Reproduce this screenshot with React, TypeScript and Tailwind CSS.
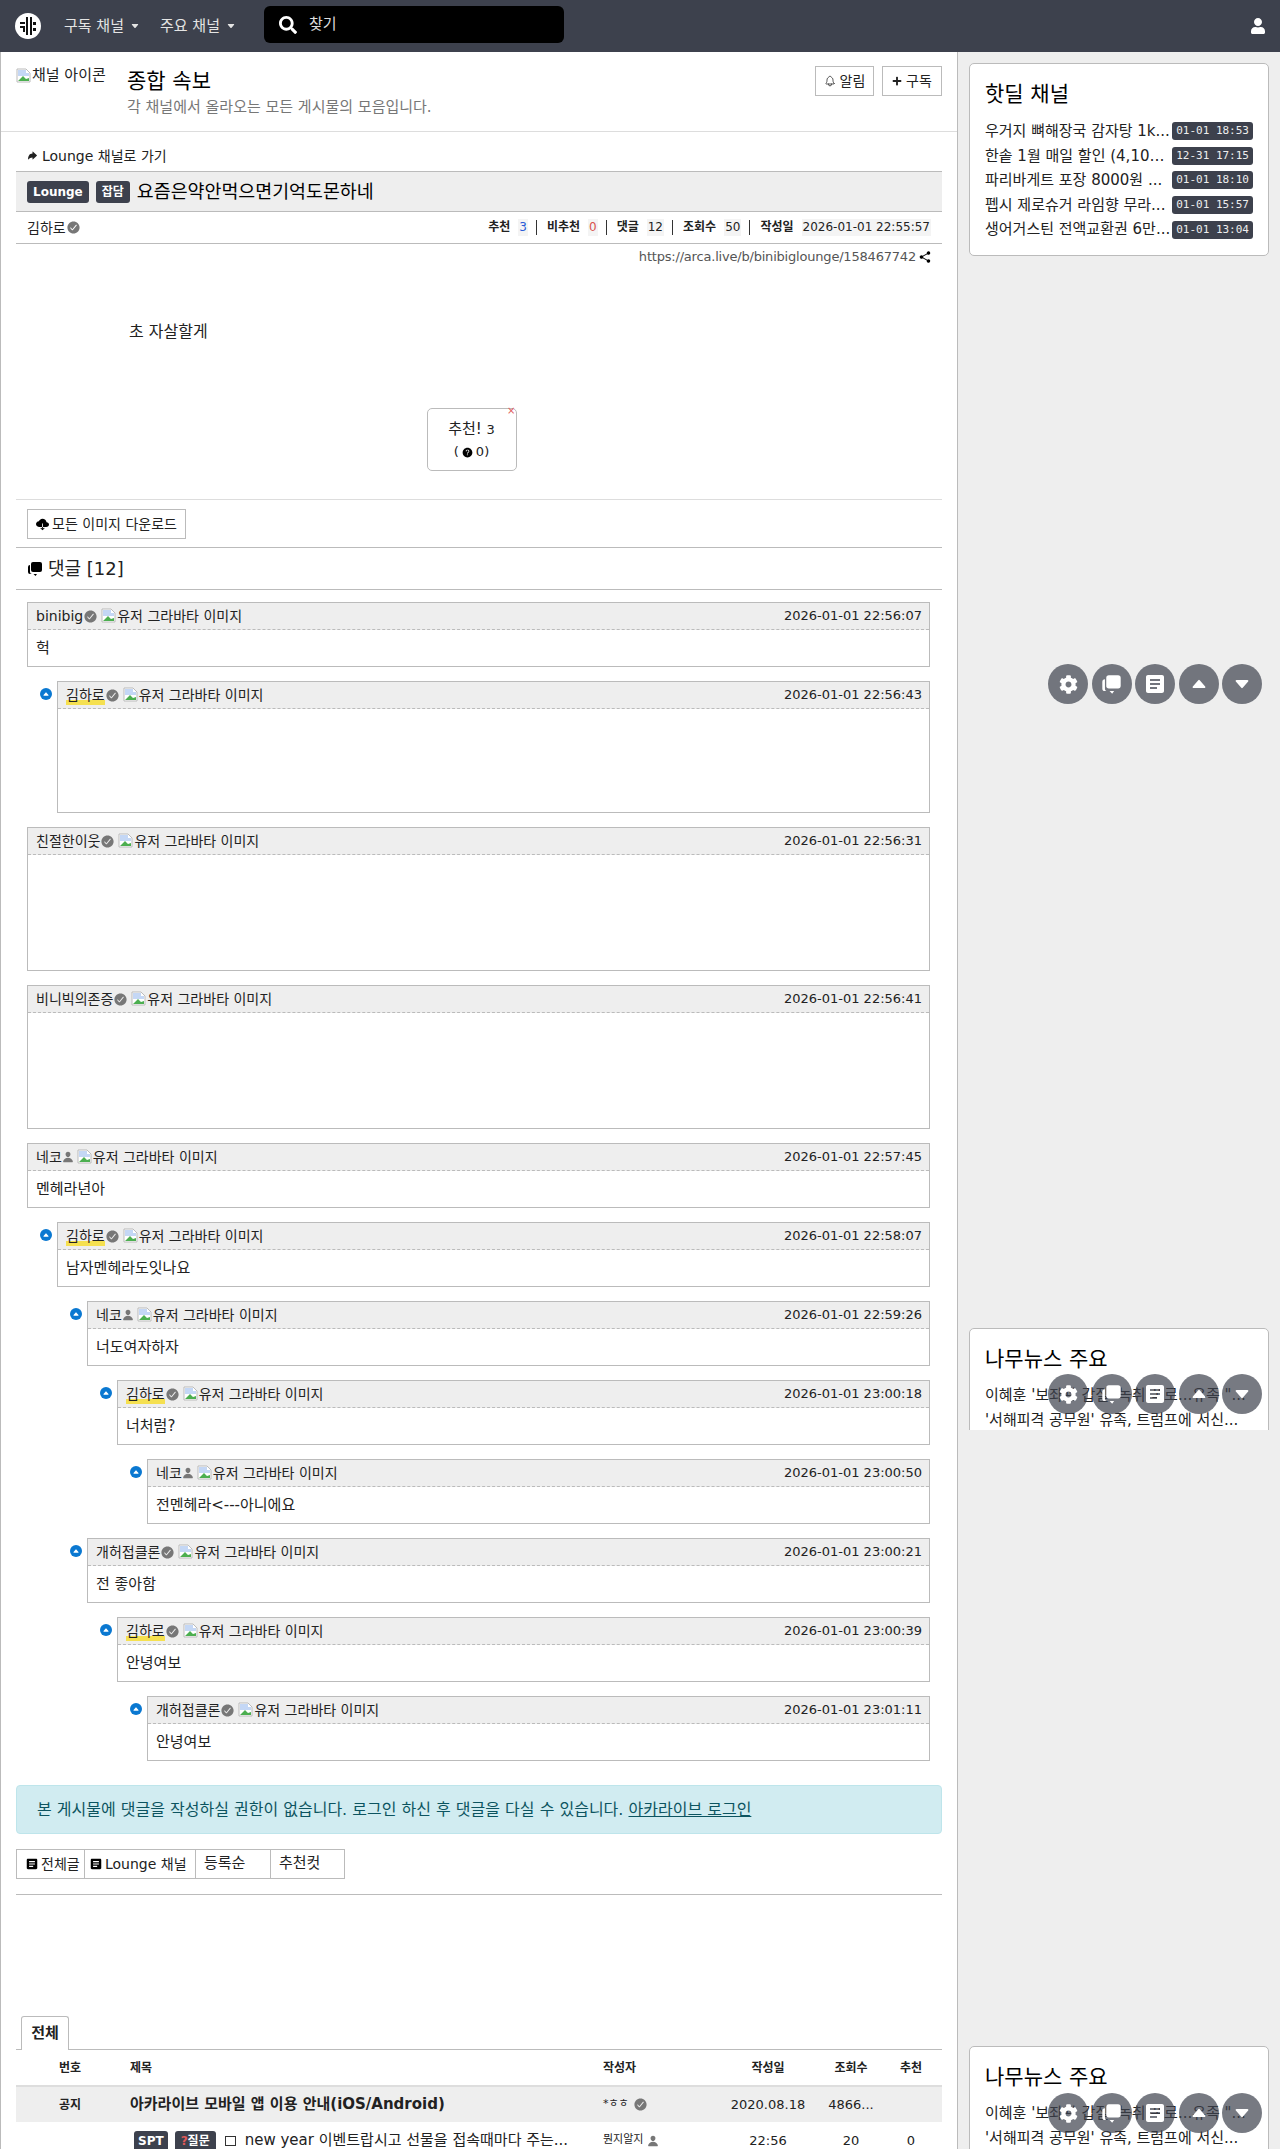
import { FaSearch, FaUser, FaCog, FaPlus } from "react-icons/fa";
import { MdArticle } from "react-icons/md";
import {
  IoArrowRedo,
  IoCaretDown,
  IoCaretUp,
  IoCloudDownload,
  IoHelpCircle,
  IoNotificationsOutline,
  IoPerson,
  IoShareSocial,
  IoCheckmarkCircle,
} from "react-icons/io5";

const BrokenImage = () => (
  <svg viewBox="0 0 16 16" className="h-4 w-4 shrink-0">
    <path d="M1 1h9l4 4v9H1z" fill="#fff" stroke="#bbb" strokeWidth="1" />
    <path d="M2 2h8v3h3v3H2z" fill="#c4d7f5" />
    <path d="M2 13l5-5 3 3 3-1v3z" fill="#4caf50" />
  </svg>
);

const Bubbles = ({ className }: { className: string }) => (
  <svg viewBox="0 0 16 16" className={className} fill="currentColor">
    <rect x="4" y="1" width="11" height="10" rx="2" />
    <path d="M3 4v7a2 2 0 0 0 2 2h5l-1.5 2-2-2H3a2 2 0 0 1-2-2V6a2 2 0 0 1 2-2z" />
  </svg>
);

const Logo = () => (
  <svg viewBox="0 0 26 26" className="h-[26px] w-[26px]">
    <circle cx="13" cy="13" r="13" fill="#fff" />
    <rect x="11" y="4" width="2" height="18" fill="#111" />
    <rect x="15" y="4" width="2" height="18" fill="#111" />
    <rect x="5" y="9" width="5" height="2" fill="#111" />
    <rect x="5" y="13" width="5" height="2" fill="#111" />
    <rect x="8" y="15" width="2" height="4" fill="#111" />
    <rect x="18" y="9" width="3" height="3" fill="#111" />
    <rect x="18" y="15" width="3" height="3" fill="#111" />
  </svg>
);

const Check = () => <IoCheckmarkCircle className="inline h-[15px] w-[15px] shrink-0 text-[#777]" />;
const UserMark = () => <IoPerson className="inline h-[12px] w-[12px] shrink-0 text-[#777]" />;

const deals = [
  ["우거지 뼈해장국 감자탕 1k...", "01-01 18:53"],
  ["한솥 1월 매일 할인 (4,100...", "12-31 17:15"],
  ["파리바게트 포장 8000원 ...", "01-01 18:10"],
  ["펩시 제로슈거 라임향 무라...", "01-01 15:57"],
  ["생어거스틴 전액교환권 6만...", "01-01 13:04"],
];

type CommentItem = {
  name: string;
  mark: "check" | "user";
  date: string;
  body?: string;
  depth: number;
  height?: string;
  mine?: boolean;
};

const comments: CommentItem[] = [
  { name: "binibig", mark: "check", date: "2026-01-01 22:56:07", body: "헉", depth: 0 },
  { name: "김하로", mark: "check", date: "2026-01-01 22:56:43", depth: 1, height: "h-[103px]", mine: true },
  { name: "친절한이웃", mark: "check", date: "2026-01-01 22:56:31", depth: 0, height: "h-[115px]" },
  { name: "비니빅의존증", mark: "check", date: "2026-01-01 22:56:41", depth: 0, height: "h-[115px]" },
  { name: "네코", mark: "user", date: "2026-01-01 22:57:45", body: "멘헤라년아", depth: 0 },
  { name: "김하로", mark: "check", date: "2026-01-01 22:58:07", body: "남자멘헤라도잇나요", depth: 1, mine: true },
  { name: "네코", mark: "user", date: "2026-01-01 22:59:26", body: "너도여자하자", depth: 2 },
  { name: "김하로", mark: "check", date: "2026-01-01 23:00:18", body: "너처럼?", depth: 3, mine: true },
  { name: "네코", mark: "user", date: "2026-01-01 23:00:50", body: "전멘헤라<---아니에요", depth: 4 },
  { name: "개허접클론", mark: "check", date: "2026-01-01 23:00:21", body: "전 좋아함", depth: 2 },
  { name: "김하로", mark: "check", date: "2026-01-01 23:00:39", body: "안녕여보", depth: 3, mine: true },
  { name: "개허접클론", mark: "check", date: "2026-01-01 23:01:11", body: "안녕여보", depth: 4 },
];

const indent = ["pl-0", "pl-0", "pl-[30px]", "pl-[60px]", "pl-[90px]"];

const Comment = ({ item }: { item: CommentItem }) => (
  <div className={`mt-[14px] flex ${indent[item.depth]}`}>
    {item.depth > 0 && (
      <div className="w-[30px] shrink-0 pt-[7px]">
        <div className="ml-[13px] flex h-3 w-3 items-center justify-center rounded-full bg-[#0a78d1] text-white">
          <IoCaretUp className="h-2 w-2" />
        </div>
      </div>
    )}
    <div className="min-w-0 flex-1 border border-[#bbb]">
      <div className="flex h-[27px] items-center justify-between border-b border-dashed border-[#bbb] bg-[#eee] pl-2 pr-[7px] text-sm">
        <div className="flex items-center">
          <span className={item.mine ? "bg-[linear-gradient(transparent_75%,#f5e050_75%)]" : ""}>{item.name}</span>
          {item.mark === "check" ? <Check /> : <UserMark />}
          <span className="ml-[3px] flex items-center">
            <BrokenImage />
            유저 그라바타 이미지
          </span>
        </div>
        <span className="text-[13px]">{item.date}</span>
      </div>
      <div className={`${item.height ?? "h-[36px]"} flex items-center px-2 text-[15px]`}>{item.body}</div>
    </div>
  </div>
);

const FloatButtons = ({ className }: { className: string }) => (
  <div className={`absolute left-[1048px] flex gap-[3.5px] text-white ${className}`}>
    <span className="flex h-10 w-10 items-center justify-center rounded-full bg-[#3d414d]/70">
      <FaCog className="h-[19px] w-[19px]" />
    </span>
    <span className="flex h-10 w-10 items-center justify-center rounded-full bg-[#3d414d]/70">
      <Bubbles className="h-[21px] w-[21px]" />
    </span>
    <span className="flex h-10 w-10 items-center justify-center rounded-full bg-[#3d414d]/70">
      <MdArticle className="h-[24px] w-[24px]" />
    </span>
    <span className="flex h-10 w-10 items-center justify-center rounded-full bg-[#3d414d]/70">
      <IoCaretUp className="h-[20px] w-[20px]" />
    </span>
    <span className="flex h-10 w-10 items-center justify-center rounded-full bg-[#3d414d]/70">
      <IoCaretDown className="h-[20px] w-[20px]" />
    </span>
  </div>
);

const NewsCard = () => (
  <div className="rounded-[5px] border border-[#bbb] bg-white px-[15px] pt-[15px] pb-4">
    <h3 className="text-[21px] leading-[30px] text-black">나무뉴스 주요</h3>
    <p className="mt-[9px] truncate text-[15px] leading-[25px]">이혜훈 '보좌관 갑질' 녹취 폭로...유족 "...</p>
    <p className="truncate text-[15px] leading-[25px]">'서해피격 공무원' 유족, 트럼프에 서신...</p>
  </div>
);

const StatLabel = ({ label, value, color }: { label: string; value: string; color?: string }) => (
  <span className="flex items-center">
    <b className="text-[12px]">{label}</b>
    <span className={`ml-2 bg-[#f4f4f4] px-[1px] ${color ?? ""}`}>{value}</span>
  </span>
);

const Divider = () => <span className="ml-2 mr-[10px] h-[15px] w-px bg-[#333]" />;

export default function App() {
  return (
    <div className="relative h-[2149px] overflow-hidden bg-white font-['DejaVu_Sans','Noto_Sans_CJK_KR',sans-serif] text-[#222]">
      {/* Top bar */}
      <header className="flex h-[52px] items-center bg-[#3d414d] pl-[15px] pr-[14px] text-white">
        <Logo />
        <nav className="ml-[23px] flex items-center text-[15px] text-[#e4e4e4]">
          <span className="flex w-[96px] items-center">
            구독 채널
            <IoCaretDown className="ml-[6px] h-[10px] w-[10px]" />
          </span>
          <span className="flex w-[104px] items-center">
            주요 채널
            <IoCaretDown className="ml-[6px] h-[10px] w-[10px]" />
          </span>
        </nav>
        <div className="-mt-[3px] flex h-[37px] w-[300px] items-center rounded-[6px] bg-black pl-[15px] text-[15px] text-[#ddd]">
          <FaSearch className="h-[18px] w-[18px] text-white" />
          <span className="ml-[12px]">찾기</span>
        </div>
        <FaUser className="ml-auto h-4 w-4" />
      </header>

      <div className="flex">
        <main className="w-[958px] shrink-0 border-x border-x-[#bbb]">
          {/* Channel head */}
          <div className="flex h-[80px] border-b border-[#ddd] pl-[15px] pr-[15px] pt-[14px]">
            <div className="flex h-[19px] w-[96px] shrink-0 items-center overflow-hidden whitespace-nowrap text-[15px]">
              <BrokenImage />
              채널 아이콘
            </div>
            <div className="ml-[15px]">
              <h1 className="text-[21px] leading-[30px] text-black">종합 속보</h1>
              <p className="text-[15px] leading-[22px] text-[#777]">각 채널에서 올라오는 모든 게시물의 모음입니다.</p>
            </div>
            <div className="ml-auto flex gap-2">
              <span className="flex h-[30px] w-[59px] items-center justify-center gap-1 border border-[#bbb] text-sm">
                <IoNotificationsOutline className="h-3 w-3" />
                알림
              </span>
              <span className="flex h-[30px] w-[60px] items-center justify-center gap-1 border border-[#bbb] text-sm">
                <FaPlus className="h-[10px] w-[10px]" />
                구독
              </span>
            </div>
          </div>

          <div className="px-[15px]">
            <a className="flex h-[39px] items-center pl-[11px] pt-[8px] text-sm">
              <IoArrowRedo className="mr-1 h-[11px] w-[11px]" />
              Lounge 채널로 가기
            </a>

            {/* Post title */}
            <div className="flex h-[41px] items-center gap-[7px] border-y border-[#bbb] bg-[#eee] pl-[11px]">
              <span className="rounded-[3px] bg-[#3d414d] px-[6px] py-[2px] text-[12px] font-bold text-white">Lounge</span>
              <span className="rounded-[3px] bg-[#3d414d] px-[6px] py-[2px] text-[12px] font-bold text-white">잡담</span>
              <span className="text-[18.4px] text-black">요즘은약안먹으면기억도몬하네</span>
            </div>

            {/* Post meta */}
            <div className="flex h-[32px] items-center justify-between border-b border-[#bbb] px-[11px] text-sm">
              <span className="flex items-center">
                김하로
                <Check />
              </span>
              <div className="flex items-center text-[12px]">
                <StatLabel label="추천" value="3" color="text-[#2a5bd7]" />
                <Divider />
                <StatLabel label="비추천" value="0" color="text-[#d9534f]" />
                <Divider />
                <StatLabel label="댓글" value="12" />
                <Divider />
                <StatLabel label="조회수" value="50" />
                <Divider />
                <StatLabel label="작성일" value="2026-01-01 22:55:57" />
              </div>
            </div>

            <div className="flex h-[26px] items-center justify-end pr-[10px] text-[13px] tracking-[-0.2px] text-[#555]">
              https://arca.live/b/binibiglounge/158467742
              <IoShareSocial className="ml-[2px] h-[14px] w-[14px] text-black" />
            </div>

            <p className="mt-[52px] pl-[113px] text-base leading-5">초 자살할게</p>

            {/* Vote */}
            <div className="mt-[66px] flex justify-center pr-[15px]">
              <div className="relative flex h-[63px] w-[90px] flex-col items-center justify-center rounded-[5px] border border-[#bbb]">
                <span className="text-[15px] leading-6">
                  추천! <span className="text-[13px]">3</span>
                </span>
                <span className="flex items-center text-[13px] leading-5">
                  (<IoHelpCircle className="mx-[2px] h-[13px] w-[13px] text-black" /> 0)
                </span>
                <span className="absolute -top-[3px] right-0 text-[10px] leading-none text-[#e05a5a]">×</span>
              </div>
            </div>

            <div className="mt-[28px] border-t border-[#ddd] pl-[11px] pt-[9px]">
              <span className="flex h-[30px] w-[159px] items-center justify-center gap-[3px] border border-[#bbb] text-sm">
                <IoCloudDownload className="h-[13px] w-[13px] text-black" />
                모든 이미지 다운로드
              </span>
            </div>

            <div className="mt-2 flex h-[43px] items-center border-y border-[#bbb] pl-[11px] text-lg">
              <Bubbles className="mr-[5px] h-[16px] w-[16px] text-black" />
              댓글 [12]
            </div>

            {/* Comments */}
            <div className="pl-[11px] pr-3 -mt-[2px]">
              {comments.map((item, i) => (
                <Comment key={i} item={item} />
              ))}
            </div>

            <div className="mt-6 rounded-[4px] border border-[#bee5eb] bg-[#d1ecf1] px-5 py-[13px] text-base leading-[21px] text-[#0c5460]">
              본 게시물에 댓글을 작성하실 권한이 없습니다. 로그인 하신 후 댓글을 다실 수 있습니다.{" "}
              <a className="underline">아카라이브 로그인</a>
            </div>

            {/* Board buttons */}
            <div className="mt-[15px] flex border-b border-[#bbb] pb-[15px] text-sm">
              <span className="flex h-[30px] w-[69px] items-center gap-[2px] border border-[#bbb] pl-2">
                <MdArticle className="h-[14px] w-[14px] text-black" />
                전체글
              </span>
              <span className="flex h-[30px] w-[111px] items-center gap-[2px] border border-l-0 border-[#bbb] pl-1">
                <MdArticle className="h-[14px] w-[14px] text-black" />
                Lounge 채널
              </span>
              <span className="flex h-[30px] w-[75px] items-center border border-l-0 border-[#bbb] pl-2 text-[15px]">등록순</span>
              <span className="flex h-[30px] w-[74px] items-center border border-l-0 border-[#bbb] pl-2 text-[15px]">추천컷</span>
            </div>

            {/* Article list */}
            <div className="mt-[121px] flex h-[34px] border-b border-[#bbb] pl-[5px]">
              <span className="flex h-[34px] w-[48px] items-center justify-center rounded-t-[3px] border border-b-0 border-[#bbb] bg-white text-[15px] font-bold">
                전체
              </span>
            </div>
            <div className="flex h-[35px] items-center text-[12px] font-bold">
              <span className="w-[108px] text-center">번호</span>
              <span className="ml-[6px] w-[473px]">제목</span>
              <span className="w-[121px]">작성자</span>
              <span className="w-[88px] text-center">작성일</span>
              <span className="w-[78px] text-center">조회수</span>
              <span className="w-[42px] text-center">추천</span>
            </div>
            <div className="flex h-[37px] items-center border-t-[2px] border-[#ddd] bg-[#eee] text-[13px]">
              <span className="w-[108px] text-center text-[12px] font-bold">공지</span>
              <span className="ml-[6px] w-[473px] text-[15px] font-bold">아카라이브 모바일 앱 이용 안내(iOS/Android)</span>
              <span className="flex w-[121px] items-center gap-1 text-[11px]">
                *ㅎㅎ
                <Check />
              </span>
              <span className="w-[88px] text-center">2020.08.18</span>
              <span className="w-[78px] text-center">4866...</span>
              <span className="w-[42px] text-center" />
            </div>
            <div className="flex h-[37px] items-center text-[13px]">
              <div className="flex w-[587px] shrink-0 items-center pl-[118px]">
                <span className="mr-[7px] rounded-[3px] bg-[#3d414d] px-[4px] py-[2px] text-xs font-bold text-white">SPT</span>
                <span className="rounded-[3px] bg-[#3d414d] px-[6px] py-[2px] text-xs font-bold text-white">
                  <span className="text-[#e05a5a]">?</span>질문
                </span>
                <span className="ml-[9px] h-[10px] w-[11px] border border-[#333]" />
                <span className="ml-[9px] min-w-0 flex-1 truncate text-[15px]">new year 이벤트랍시고 선물을 접속때마다 주는...</span>
              </div>
              <span className="flex w-[121px] items-center gap-1 text-[11px]">
                뭔지알지
                <UserMark />
              </span>
              <span className="w-[88px] text-center">22:56</span>
              <span className="w-[78px] text-center">20</span>
              <span className="w-[42px] text-center">0</span>
            </div>
          </div>
        </main>

        {/* Sidebar */}
        <aside className="flex h-[2097px] min-w-0 flex-1 flex-col bg-[#eee] px-[11px] pt-[11px]">
          <div className="h-[193px] shrink-0 rounded-[5px] border border-[#bbb] bg-white px-[15px] pt-[15px]">
            <h3 className="text-[21px] leading-[30px] text-black">핫딜 채널</h3>
            <ul className="mt-[10px]">
              {deals.map(([title, time]) => (
                <li key={time} className="flex h-[24.6px] items-center justify-between text-[15px]">
                  <span className="truncate">{title}</span>
                  <span className="shrink-0 rounded-[3px] bg-[#3d414d] px-[4px] font-['DejaVu_Sans_Mono',monospace] text-[11px] leading-[18px] text-[#eee]">
                    {time}
                  </span>
                </li>
              ))}
            </ul>
          </div>
          <div className="mt-[1072px] h-[102px] shrink-0 overflow-hidden">
            <NewsCard />
          </div>
          <div className="mt-[616px] shrink-0">
            <NewsCard />
          </div>
        </aside>
      </div>

      <FloatButtons className="top-[664px]" />
      <FloatButtons className="top-[1374px]" />
      <FloatButtons className="top-[2093px]" />
    </div>
  );
}
